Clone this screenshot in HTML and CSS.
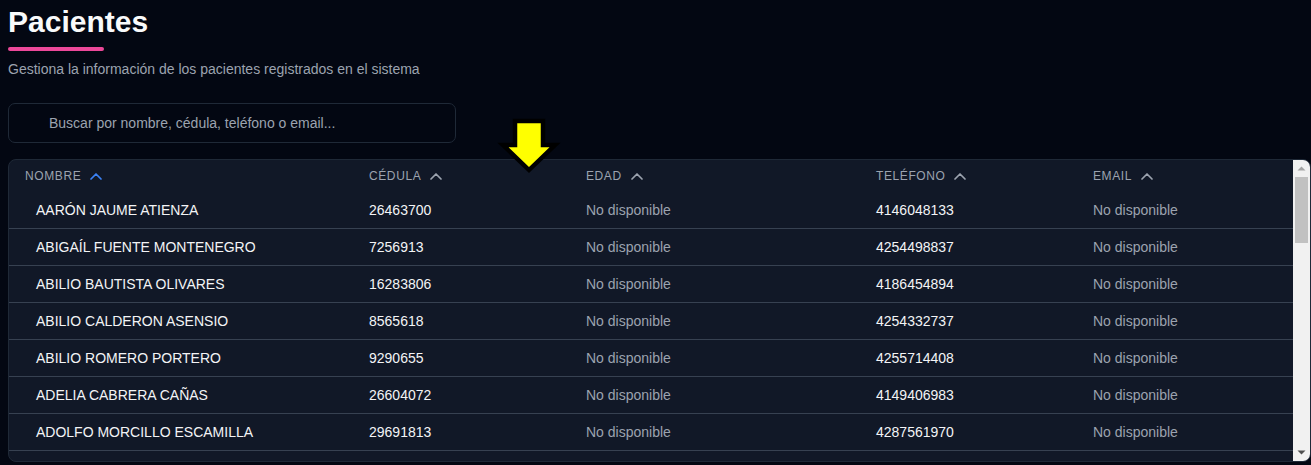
FILE: index.html
```html
<!DOCTYPE html>
<html lang="es">
<head>
<meta charset="utf-8">
<title>Pacientes</title>
<link rel="stylesheet" href="styles.css">
</head>
<body>
<main class="page">
  <header class="page-head">
    <h1 class="title">Pacientes</h1>
    <div class="title-bar"></div>
    <p class="subtitle">Gestiona la información de los pacientes registrados en el sistema</p>
  </header>

  <div class="search">
    <input class="search-input" type="text" placeholder="Buscar por nombre, cédula, teléfono o email...">
  </div>

  <div class="table-wrap">
    <div class="table-view">
      <table class="patients">
        <colgroup>
          <col class="c-name"><col class="c-id"><col class="c-age"><col class="c-phone"><col class="c-email">
        </colgroup>
        <thead>
          <tr>
            <th><span class="th-in">Nombre <svg class="chev active" viewBox="0 0 12 8"><polyline points="1,7 6,2 11,7"/></svg></span></th>
            <th><span class="th-in">Cédula <svg class="chev" viewBox="0 0 12 8"><polyline points="1,7 6,2 11,7"/></svg></span></th>
            <th><span class="th-in">Edad <svg class="chev" viewBox="0 0 12 8"><polyline points="1,7 6,2 11,7"/></svg></span></th>
            <th><span class="th-in">Teléfono <svg class="chev" viewBox="0 0 12 8"><polyline points="1,7 6,2 11,7"/></svg></span></th>
            <th><span class="th-in">Email <svg class="chev" viewBox="0 0 12 8"><polyline points="1,7 6,2 11,7"/></svg></span></th>
          </tr>
        </thead>
        <tbody>
          <tr><td class="name">AARÓN JAUME ATIENZA</td><td>26463700</td><td class="muted">No disponible</td><td>4146048133</td><td class="muted">No disponible</td></tr>
          <tr><td class="name">ABIGAÍL FUENTE MONTENEGRO</td><td>7256913</td><td class="muted">No disponible</td><td>4254498837</td><td class="muted">No disponible</td></tr>
          <tr><td class="name">ABILIO BAUTISTA OLIVARES</td><td>16283806</td><td class="muted">No disponible</td><td>4186454894</td><td class="muted">No disponible</td></tr>
          <tr><td class="name">ABILIO CALDERON ASENSIO</td><td>8565618</td><td class="muted">No disponible</td><td>4254332737</td><td class="muted">No disponible</td></tr>
          <tr><td class="name">ABILIO ROMERO PORTERO</td><td>9290655</td><td class="muted">No disponible</td><td>4255714408</td><td class="muted">No disponible</td></tr>
          <tr><td class="name">ADELIA CABRERA CAÑAS</td><td>26604072</td><td class="muted">No disponible</td><td>4149406983</td><td class="muted">No disponible</td></tr>
          <tr><td class="name">ADOLFO MORCILLO ESCAMILLA</td><td>29691813</td><td class="muted">No disponible</td><td>4287561970</td><td class="muted">No disponible</td></tr>
        </tbody>
      </table>
    </div>
    <div class="vscroll" aria-hidden="true">
      <div class="vs-btn"><svg viewBox="0 0 9 5"><polygon class="vs-up" points="0.5,4.5 4.5,0.5 8.5,4.5"/></svg></div>
      <div class="vs-track"><div class="vs-thumb"></div></div>
      <div class="vs-btn"><svg viewBox="0 0 9 5"><polygon class="vs-down" points="0.5,0.5 8.5,0.5 4.5,4.5"/></svg></div>
    </div>
  </div>

  <svg class="annot-arrow" viewBox="0 0 70 70" aria-hidden="true">
    <polygon points="20,9 48,9 48,33 60,33 34,58 8,33 20,33"/>
  </svg>
</main>
</body>
</html>
```

FILE: styles.css
```css
html, body {
  margin: 0;
  padding: 0;
  background: #030712;
  overflow: hidden;
  height: 100%;
}

body {
  font-family: "Liberation Sans", Arial, sans-serif;
  color: #f3f4f6;
}

.page {
  position: relative;
  padding: 4px 0 0 8px;
}

.page-head {
  display: flex;
  flex-direction: column;
}

.title {
  margin: 0;
  font-size: 30px;
  line-height: 36px;
  font-weight: 700;
  color: #f9fafb;
}

.title-bar {
  margin-top: 7px;
  width: 96px;
  height: 4px;
  border-radius: 2px;
  background: #ec4899;
}

.subtitle {
  margin: 8px 0 0;
  font-size: 14px;
  line-height: 20px;
  color: #9ca3af;
}

.search {
  margin-top: 24px;
  width: 448px;
}

.search-input {
  box-sizing: border-box;
  width: 100%;
  height: 40px;
  padding: 0 12px 0 40px;
  border: 1px solid #1f2937;
  border-radius: 7px;
  background: #030712;
  color: #f3f4f6;
  font-family: inherit;
  font-size: 14px;
  outline: none;
}

.search-input::placeholder {
  color: #9ca3af;
}

.table-wrap {
  box-sizing: border-box;
  margin-top: 16px;
  height: 303px;
  display: flex;
  border: 1px solid #1f2937;
  border-radius: 8px;
  background: #111827;
  overflow: hidden;
}

.table-view {
  flex: 1;
  min-width: 0;
  overflow: hidden;
}

.vscroll {
  flex: 0 0 17px;
  display: flex;
  flex-direction: column;
  background: #f1f1f1;
}

.vs-btn {
  height: 17px;
  display: flex;
  align-items: center;
  justify-content: center;
}

.vs-btn svg {
  width: 9px;
  height: 5px;
}

.vs-up { fill: #a3a3a3; }
.vs-down { fill: #505050; }

.vs-track {
  flex: 1;
  padding: 0 2px;
}

.vs-thumb {
  height: 66px;
  background: #c1c1c1;
}

.patients {
  width: 100%;
  table-layout: fixed;
  border-collapse: collapse;
  font-size: 14px;
}

.c-name { width: 344px; }
.c-id { width: 217px; }
.c-age { width: 290px; }
.c-phone { width: 217px; }
.c-email { width: 216px; }

.patients th {
  height: 32px;
  padding: 0 16px;
  text-align: left;
  font-weight: 400;
  font-size: 12px;
  letter-spacing: 0.05em;
  text-transform: uppercase;
  color: #9ca3af;
  vertical-align: middle;
}

.th-in {
  display: inline-flex;
  align-items: center;
  gap: 9px;
}

.chev {
  width: 12px;
  height: 8px;
  fill: none;
  stroke: #9ca3af;
  stroke-width: 1.7;
  stroke-linecap: round;
  stroke-linejoin: round;
}

.chev.active {
  stroke: #3b82f6;
}

.patients td {
  height: 36px;
  padding: 0 16px;
  color: #f3f4f6;
  white-space: nowrap;
  overflow: hidden;
  vertical-align: middle;
}

.patients tbody tr + tr td {
  border-top: 1px solid #374151;
}

.patients tbody tr:last-child td {
  border-bottom: 1px solid #374151;
}

.patients td.name {
  padding-left: 27px;
}

.patients td.muted {
  color: #9ca3af;
}

.annot-arrow {
  position: absolute;
  left: 495px;
  top: 112px;
  width: 70px;
  height: 70px;
}

.annot-arrow polygon {
  fill: #ffff00;
  stroke: #000;
  stroke-width: 4.5;
  stroke-linejoin: miter;
}
```
